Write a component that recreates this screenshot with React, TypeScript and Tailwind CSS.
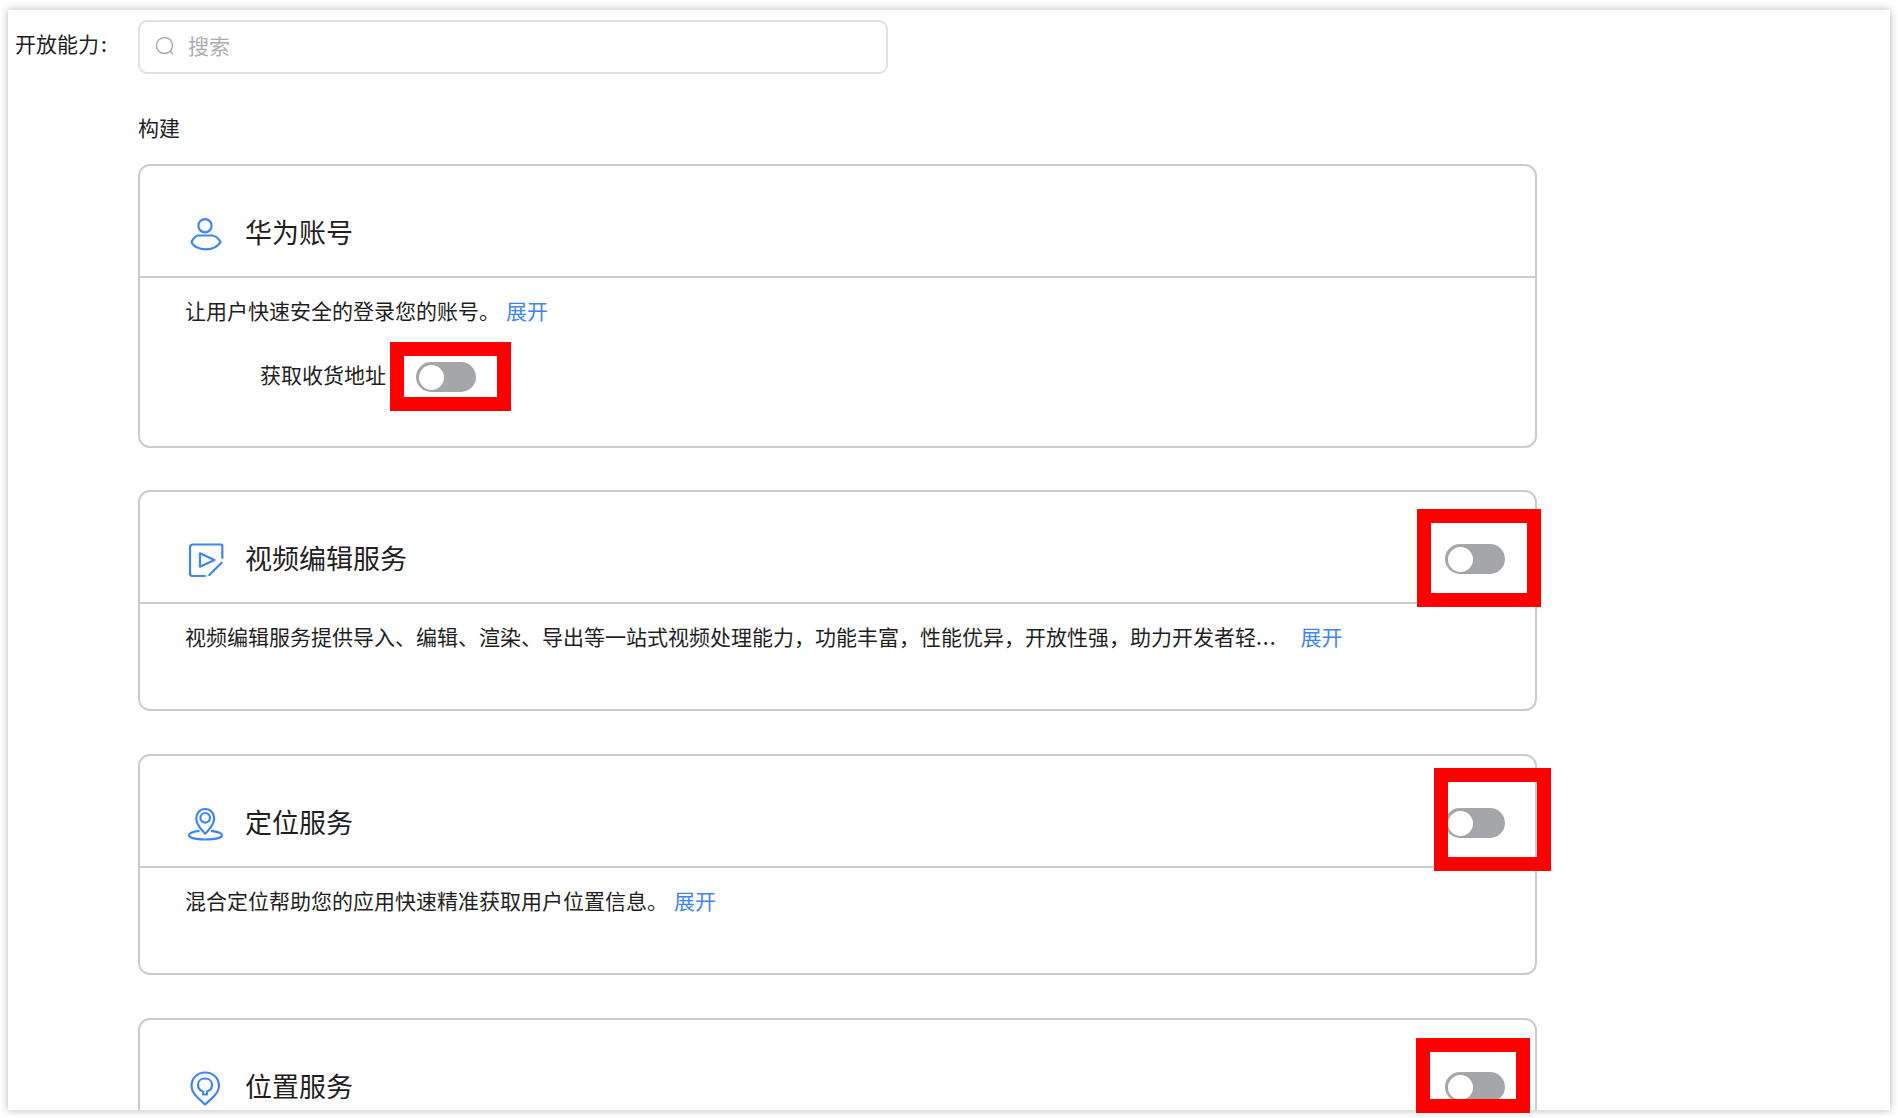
const BLUE = '#3f84f6'

function UserIcon() {
  return (
    <svg width="50" height="50" viewBox="0 0 50 50" fill="none" stroke={BLUE} strokeWidth="2.2">
      <circle cx="25" cy="16.7" r="6.6" />
      <path d="M18 26.5H32C36 27 39 30 40.5 33C38 37.5 32 40.3 25.5 40.3C19 40.3 13 37.5 11.5 33C13 30 15 27 18 26.5Z" />
    </svg>
  )
}

function VideoIcon() {
  return (
    <svg width="50" height="50" viewBox="0 0 50 50" fill="none" stroke={BLUE} strokeWidth="2.2" strokeLinecap="round" strokeLinejoin="round">
      <path d="M42.3 23V11C42.3 10 41.8 9.5 41 9.5H13C11 9.5 10 10.5 10 12.5V38.5C10 40.3 11 41 12.5 41H25" />
      <path d="M41.7 27.7L29.3 40" />
      <path d="M20 18.3V31.7L34.5 25Z" />
    </svg>
  )
}

function LocateIcon() {
  return (
    <svg width="50" height="50" viewBox="0 0 50 50" fill="none" stroke={BLUE} strokeWidth="2.2" strokeLinejoin="round">
      <path d="M25.2 34.8C21 30.5 16.2 25.5 16.2 19.5C16.2 14 20 10 25.2 10C30.4 10 34.2 14 34.2 19.5C34.2 25.5 29.4 30.5 25.2 34.8Z" />
      <circle cx="25.2" cy="18.8" r="4.8" />
      <path d="M19.5 31.8C12.5 32.6 9 34.3 9 36.3C9 38.8 16 40.5 25.5 40.5C35 40.5 42 38.8 42 36.3C42 34.3 38 32.6 31 31.8" />
    </svg>
  )
}

function PinIcon() {
  return (
    <svg width="50" height="50" viewBox="0 0 50 50" fill="none" stroke={BLUE} strokeWidth="2.2" strokeLinejoin="round">
      <path d="M25 41.5C18 35 11.5 30 11.5 23C11.5 15 17.5 9.5 25.2 9.5C33 9.5 39 15 39 23C39 30 32 35 25 41.5Z" />
      <path d="M23 31.5H27V28.5C30 27.5 32 25 32 22C32 18 29 15.5 25 15.5C21 15.5 18 18 18 22C18 25 20 27.5 23 28.5Z" />
    </svg>
  )
}

function Toggle() {
  return (
    <div className="flex items-center w-[60px] h-[30px] pl-[3px] rounded-full bg-[#a5a6aa] shrink-0">
      <div className="w-[25px] h-[25px] rounded-full bg-white" />
    </div>
  )
}

function Card({ icon, title, toggle, size, children }: {
  icon: React.ReactNode; title: string; toggle?: boolean; size: string; children?: React.ReactNode
}) {
  return (
    <div className={`w-[1399px] ${size} shrink-0 rounded-[12px] border-2 border-[#cccccc]`}>
      <div className="flex items-start h-[112px] pt-[43px] pl-[40px] pr-[30px] border-b-2 border-[#cccccc]">
        {icon}
        <div className="ml-[15px] -mt-[2px] text-[27px] leading-[50px] text-[#1f1f1f]">{title}</div>
        {toggle && <div className="ml-auto mt-[9px]"><Toggle /></div>}
      </div>
      {children}
    </div>
  )
}

function Desc({ text, gap }: { text: React.ReactNode; gap: string }) {
  return (
    <div className="flex pl-[45px] pt-[17px] text-[21px] leading-[30px] text-[#1f1f1f]">
      <span>{text}</span>
      <span className={`${gap} text-[#3f84f6]`}>展开</span>
    </div>
  )
}

// 标注框是截图上后画的，压在面板之上
const MARKS = [
  'left-[390px] top-[342px] w-[121px] h-[69px]',
  'left-[1417px] top-[509px] w-[124px] h-[98px]',
  'left-[1434px] top-[768px] w-[117px] h-[103px]',
  'left-[1416px] top-[1038px] w-[114px] h-[75px]',
]

export default function App() {
  return (
    <div className="relative h-[1118px] overflow-hidden bg-white pt-[10px] px-[8px] font-['Noto_Sans_CJK_SC',sans-serif]">
      <div className="h-[1100px] bg-white shadow-[0_0_8px_rgba(0,0,0,0.3)]">
        <div className="h-full overflow-hidden pt-[10px] pl-[7px]">
          {/* Search */}
          <div className="flex items-start">
            <div className="w-[123px] text-[21px] leading-[30px] mt-[8px] text-[#1f1f1f]">开放能力<span className="ml-[2px]">:</span></div>
            <div className="flex items-center w-[750px] h-[54px] pl-[15px] pb-[2px] rounded-[9px] border-2 border-[#e0e1e6]">
              <svg width="20" height="20" viewBox="0 0 20 20" fill="none" stroke="#a9a9ad" strokeWidth="1.4" strokeLinecap="round">
                <circle cx="9.5" cy="9.5" r="8" />
                <path d="M15.3 15.3L17.5 17.8" />
              </svg>
              <span className="ml-[13px] text-[21px] text-[#adadb2]">搜索</span>
            </div>
          </div>

          <div className="ml-[123px] mt-[38px]">
            <div className="text-[21px] leading-[30px] mb-[22px] text-[#1f1f1f]">构建</div>

            <Card icon={<UserIcon />} title="华为账号" size="h-[284px] mb-[42px]">
              <Desc text="让用户快速安全的登录您的账号。" gap="ml-[6px]" />
              <div className="flex items-start pl-[46px] mt-[34px]">
                <div className="w-[229px] pr-[29px] text-right text-[21px] leading-[30px] text-[#1f1f1f]">获取收货地址</div>
                <div className="ml-[1px] mt-[3px]"><Toggle /></div>
              </div>
            </Card>

            <Card icon={<VideoIcon />} title="视频编辑服务" toggle size="h-[221px] mb-[43px]">
              <Desc
                text={<>视频编辑服务提供导入、编辑、渲染、导出等一站式视频处理能力，功能丰富，性能优异，开放性强，助力开发者轻<span className="tracking-[1px]">...</span></>}
                gap="ml-[24px]"
              />
            </Card>

            <Card icon={<LocateIcon />} title="定位服务" toggle size="h-[221px] mb-[43px]">
              <Desc text="混合定位帮助您的应用快速精准获取用户位置信息。" gap="ml-[6px]" />
            </Card>

            <Card icon={<PinIcon />} title="位置服务" toggle size="h-[221px]" />
          </div>
        </div>
      </div>

      {MARKS.map(m => (
        <div key={m} className={`absolute ${m} border-[14px] border-[#ff0000]`} />
      ))}
    </div>
  )
}
